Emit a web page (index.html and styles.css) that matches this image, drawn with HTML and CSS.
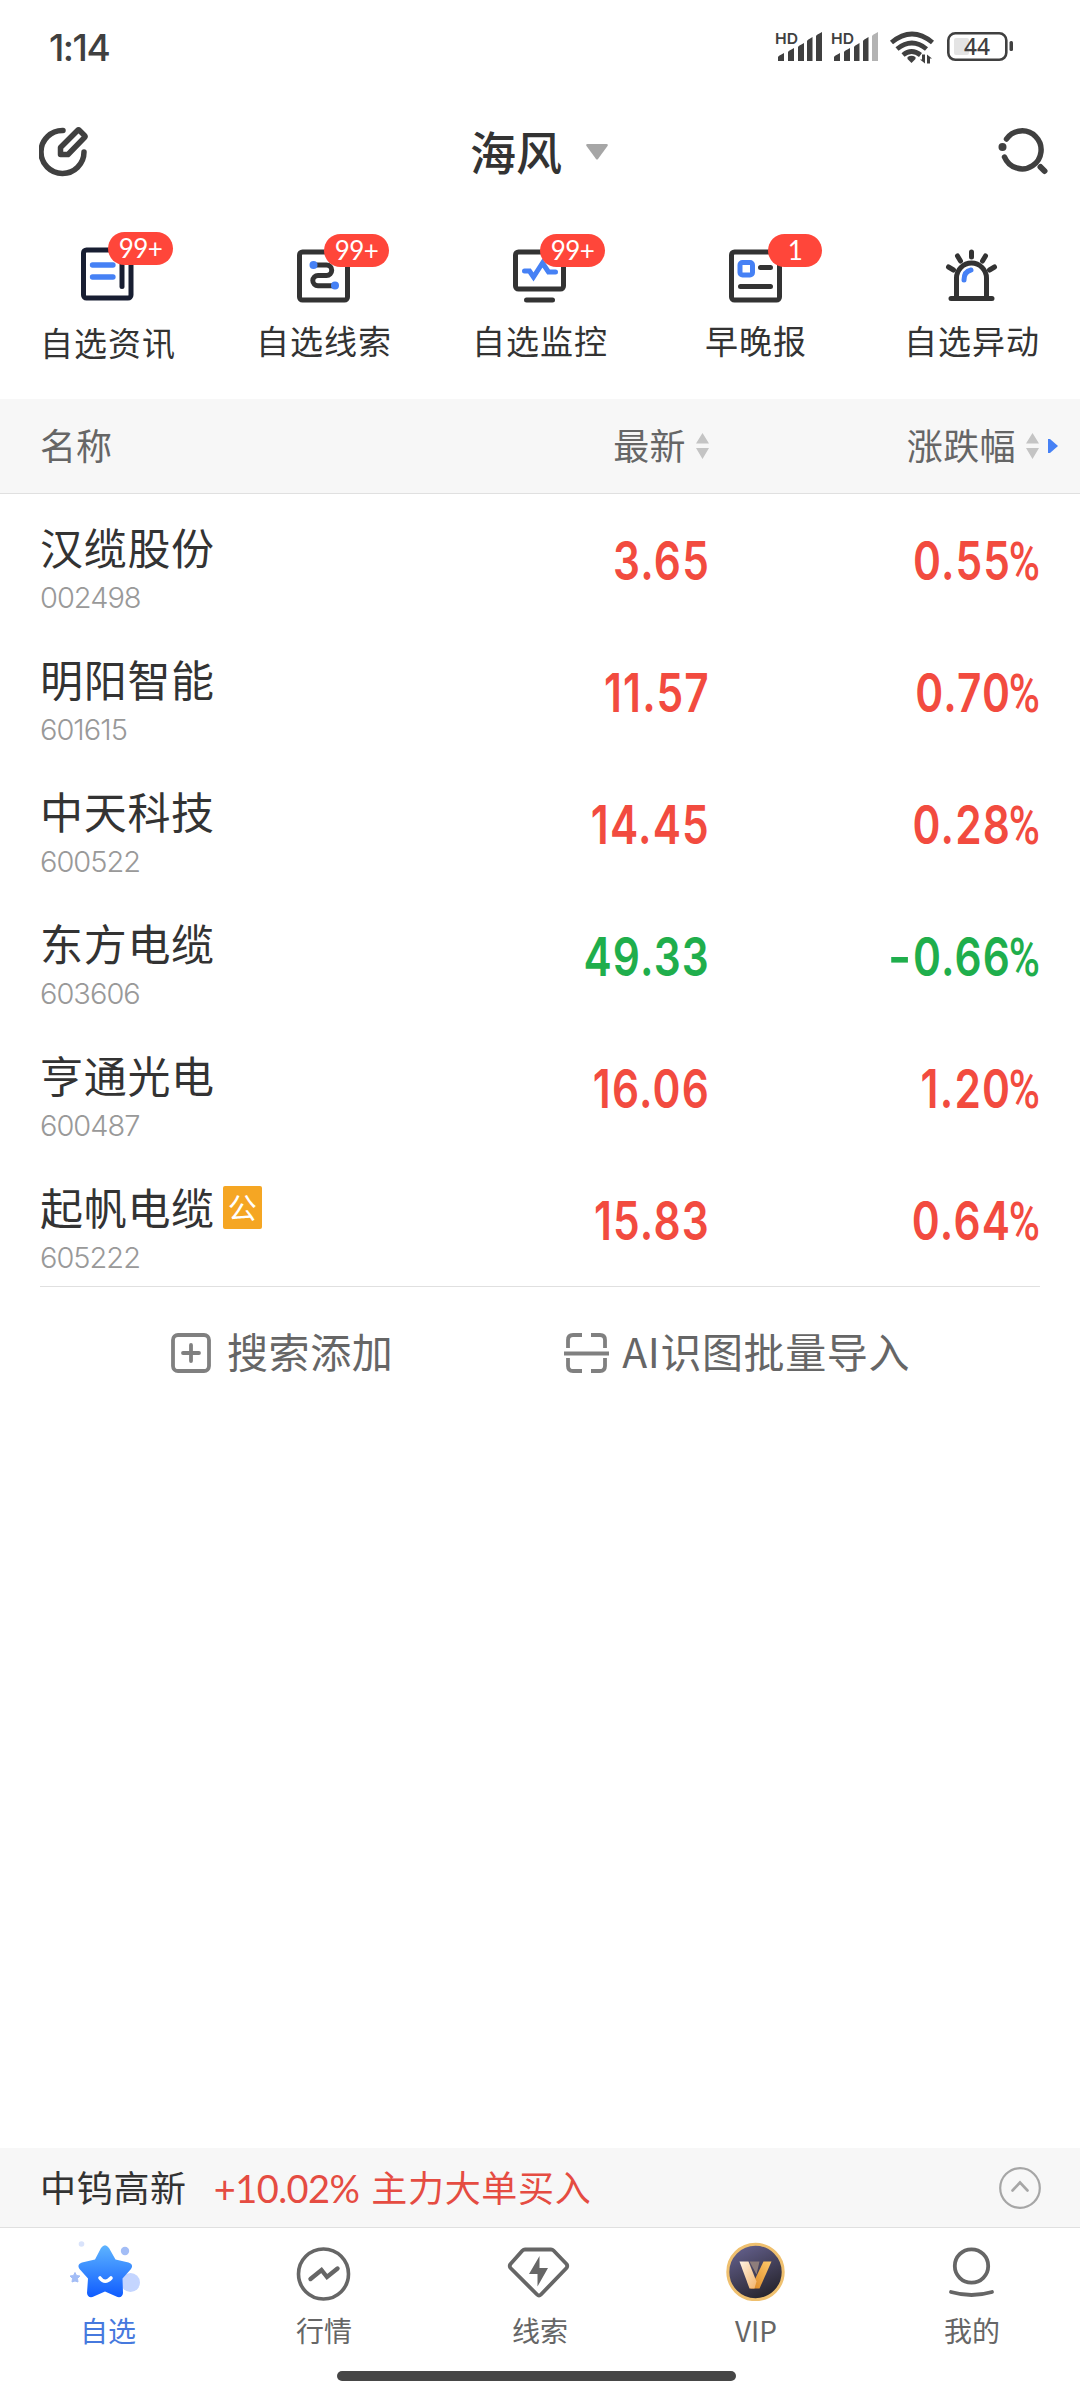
FILE: index.html
```html
<!DOCTYPE html>
<html lang="zh-CN">

<head>
    <meta charset="UTF-8">
    <meta name="viewport" content="width=device-width, initial-scale=1.0">
    <title>海风</title>
    <link rel="stylesheet" href="styles.css">
</head>

<body>
    <div class="status">
        <span class="clock">1:14</span>
        <svg class="status_icons" width="244" height="44" viewBox="772 25 244 44">
            <g fill="#404040">
                <text class="hd" x="775" y="43.500" textLength="23" lengthAdjust="spacingAndGlyphs">HD</text>
                <path d="M778 61v-4q0-1 6-4v8zM788 61v-9q0-1 6-4v13zM798 61v-14q0-1 6-4v18zM807 61v-20q0-1 5.500-4v24zM816 61v-25q0-1 6-4v29z" />
                <text class="hd" x="831" y="43.500" textLength="23" lengthAdjust="spacingAndGlyphs">HD</text>
                <path d="M834 61v-4q0-1 6-4v8zM844 61v-9q0-1 6-4v13zM854 61v-14q0-1 5.500-4v18zM863 61v-20q0-1 5.500-4v24z" />
                <path fill="#b3b3b3" d="M872 61v-25q0-1 6-4v29z" />
                <path d="M907.500 57q4-2.500 8 0v2l-4 4-4-4z" />
                <path d="M922 54.500h3v9l-5-4h2zM927 63.500v-9l5 4h-2v5z" />
                <rect x="1009.500" y="41" width="3.500" height="10" rx="1.500" />
                <rect x="954" y="38" width="15" height="17" rx="2" fill="#e4e4e4" />
                <text class="battery_num" x="964" y="55" textLength="26" lengthAdjust="spacingAndGlyphs">44</text>
            </g>
            <g fill="none" stroke="#404040">
                <path stroke-width="4.800" d="M891.500 42.500q20.500-17 41 0M897 49q15-12 29.500 0M903 55q8.500-7 17.500 0" />
                <rect x="948.300" y="33.300" width="58" height="26.500" rx="7" stroke-width="2.600" />
            </g>
        </svg>
    </div>

    <div class="top_bar">
        <svg width="50" height="50" viewBox="0 0 50 50" fill="none" stroke="#404040" stroke-width="5.500" stroke-linecap="round" stroke-linejoin="round">
            <path d="M24 3.500A21.500 21.500 0 1 0 45 25" />
            <path d="M21.500 20.500L38.500 3.500q1-1 2 0l5 5q1 1 0 2L29 27.500h-7.500z" />
        </svg>
        <div class="title"><span>海风</span>
            <svg width="22" height="16" viewBox="0 0 22 16">
                <path fill="#a6a6a6" d="M1.500 0h19q2 0 1 2L12 15q-1 1-2 0L.5 2q-1-2 1-2z" />
            </svg>
        </div>
        <svg width="50" height="50" viewBox="0 0 50 50" fill="none" stroke="#404040" stroke-width="5.500" stroke-linecap="round">
            <path d="M8.500 12A19 19 0 1 1 6.500 30" />
            <circle cx="4.500" cy="20" r="4" fill="#404040" stroke="none" />
            <path d="M42.500 40l4 4" stroke-width="6" />
        </svg>
    </div>

    <div class="menu">
        <div class="menu_item first">
            <svg width="54" height="54" viewBox="0.500 0 54 54" fill="none" stroke="#181e32" stroke-width="5" stroke-linecap="round">
                <rect x="3" y="3" width="47.500" height="48" rx="3" />
                <path d="M41.500 15v24.500" />
                <path d="M12 18h20.500M12 30h20.500" stroke="#4681f5" stroke-width="5.300" />
            </svg>
            <span class="badge">99+</span>
            <span>自选资讯</span>
        </div>
        <div class="menu_item">
            <svg width="54" height="54" viewBox="0.500 0 54 54" fill="none" stroke="#333" stroke-width="5">
                <rect x="3" y="3" width="48" height="48" rx="3" />
                <path d="M17 16h13a5.200 5.200 0 0 1 0 10.400H21.500a5.200 5.200 0 0 0 0 10.400H37" />
                <circle cx="17" cy="16" r="4" fill="#4681f5" stroke="none" />
                <circle cx="38.500" cy="36.500" r="4" fill="#4681f5" stroke="none" />
            </svg>
            <span class="badge">99+</span>
            <span>自选线索</span>
        </div>
        <div class="menu_item">
            <svg width="54" height="54" viewBox="0.500 0 54 54" fill="none" stroke="#333" stroke-width="5" stroke-linecap="round">
                <rect x="3" y="3" width="48" height="37" rx="3" />
                <path d="M14 51h26" />
                <path d="M12 22h5l4 6 9-14 6 9h7" stroke="#4681f5" />
            </svg>
            <span class="badge">99+</span>
            <span>自选监控</span>
        </div>
        <div class="menu_item">
            <svg width="54" height="54" viewBox="0.500 0 54 54" fill="none" stroke="#333" stroke-width="5" stroke-linecap="round">
                <rect x="3" y="3" width="48" height="48" rx="3" />
                <rect x="11.500" y="13.500" width="12.500" height="12.500" rx="2.500" stroke="#4681f5" />
                <path d="M32 18.500h10M12 37.500h30" />
            </svg>
            <span class="badge one">1</span>
            <span>早晚报</span>
        </div>
        <div class="menu_item">
            <svg width="54" height="54" viewBox="0.500 0 54 54" fill="none" stroke="#333" stroke-width="5" stroke-linecap="round">
                <path d="M6.500 49.500h41M12 49V29a15 15 0 0 1 30 0v20" />
                <path d="M27 3v5M13 7l3 5M41 7l-3 5M4 18l5 3M50 18l-5 3" />
                <path d="M19.500 31q0-8.500 7-10" stroke="#4681f5" />
            </svg>
            <span>自选异动</span>
        </div>
    </div>

    <div class="grid_row head">
        <div><span>名称</span></div>
        <div class="right"><span>最新</span>
            <svg width="13" height="26" viewBox="0 0 13 26" fill="#c4c4c4"><path d="M6.500 0L13 10.500H0zM0 15h13L6.500 26z" /></svg>
        </div>
        <div class="right"><span>涨跌幅</span>
            <svg width="13" height="26" viewBox="0 0 13 26" fill="#c4c4c4"><path d="M6.500 0L13 10.500H0zM0 15h13L6.500 26z" /></svg>
            <svg class="more" width="10" height="14" viewBox="0 0 10 14"><path fill="#4681f5" d="M0 0h2l8 7-8 7H0z" /></svg>
        </div>
    </div>

    <div class="list">
        <div class="grid_row">
            <div><div class="name">汉缆股份</div><div class="code">002498</div></div>
            <div class="num">3.65</div>
            <div class="num">0.55<span class="unit">%</span></div>
        </div>
        <div class="grid_row">
            <div><div class="name">明阳智能</div><div class="code">601615</div></div>
            <div class="num">11.57</div>
            <div class="num">0.70<span class="unit">%</span></div>
        </div>
        <div class="grid_row">
            <div><div class="name">中天科技</div><div class="code">600522</div></div>
            <div class="num">14.45</div>
            <div class="num">0.28<span class="unit">%</span></div>
        </div>
        <div class="grid_row">
            <div><div class="name">东方电缆</div><div class="code">603606</div></div>
            <div class="num down">49.33</div>
            <div class="num down"><span class="minus">-</span>0.66<span class="unit">%</span></div>
        </div>
        <div class="grid_row">
            <div><div class="name">亨通光电</div><div class="code">600487</div></div>
            <div class="num">16.06</div>
            <div class="num">1.20<span class="unit">%</span></div>
        </div>
        <div class="grid_row">
            <div><div class="name">起帆电缆<span class="tag">公</span></div><div class="code">605222</div></div>
            <div class="num">15.83</div>
            <div class="num">0.64<span class="unit">%</span></div>
        </div>
    </div>

    <div class="add">
        <div class="add_item">
            <svg width="40" height="40" viewBox="0 0 40 40" fill="none" stroke="#808080" stroke-width="3.800" stroke-linecap="round">
                <rect x="2" y="2" width="36" height="36" rx="5" />
                <path d="M20 12v16M12 20h16" />
            </svg>
            <span>搜索添加</span>
        </div>
        <div class="add_item">
            <svg width="45" height="40" viewBox="0 0 45 40" fill="none" stroke="#808080" stroke-width="3.800">
                <path d="M18 2H9q-5 0-5 5v8M27 2h9q5 0 5 5v8M18 38H9q-5 0-5-5v-8M27 38h9q5 0 5-5v-8M0 20.500h45" />
            </svg>
            <span>AI识图批量导入</span>
        </div>
    </div>

    <div class="ticker">
        <span>中钨高新</span>
        <span class="ticker_red"><span class="pct">+10.02%</span>主力大单买入</span>
        <svg width="42" height="42" viewBox="0 0 42 42" fill="none" stroke="#a6a6a6" stroke-width="2.200" stroke-linecap="round">
            <circle cx="21" cy="21" r="19.800" />
            <path d="M13.500 23.500l7.500-8 7.500 8" stroke-width="2.600" />
        </svg>
    </div>

    <div class="tabs">
        <div class="tab active">
            <svg width="76" height="62" viewBox="3 0 76 62">
                <defs>
                    <linearGradient id="star" x1="0" y1="0" x2="0" y2="1">
                        <stop offset="0" stop-color="#5eb4ff" />
                        <stop offset="1" stop-color="#0f5cff" />
                    </linearGradient>
                </defs>
                <circle cx="14.500" cy="5" r="2.800" fill="#d9e3fb" />
                <circle cx="58" cy="12" r="4.200" fill="#a3bdf6" />
                <circle cx="63.500" cy="43.500" r="9.500" fill="#c4d5ff" />
                <path fill="#a3bdf6" stroke="#a3bdf6" stroke-linejoin="round" d="M8 33.500l1.500 3 3.500.5-2.500 2.500.5 3.500-3-1-3 1 .5-3.500L3 37l3.500-.5z" />
                <path fill="url(#star)" d="M34 9q4-5.500 8 0l6.500 11.500 13 3q5.500 2 2.500 6.500L55.500 39.500 56 54q-.5 5-5.500 4L38 52.500 25.500 58q-5 1-5.500-4l1-14.500-8.500-9.500Q9.500 25.500 15 23.500l13-3z" />
                <path d="M33 39q5 6.500 11 0" fill="none" stroke="#fff" stroke-width="3.600" stroke-linecap="round" />
            </svg>
            <span>自选</span>
        </div>
        <div class="tab">
            <svg width="76" height="62" viewBox="0.500 0 76 62" fill="none" stroke="#666" stroke-width="3.600">
                <circle cx="38" cy="35" r="25" />
                <path d="M25 40l11-9 5.500 7L52 29.500" stroke-width="4.400" stroke-linecap="round" />
            </svg>
            <span>行情</span>
        </div>
        <div class="tab">
            <svg width="76" height="62" viewBox="2 -1 76 62">
                <path fill="none" stroke="#666" stroke-width="3.800" stroke-linejoin="round" d="M25 9.500h26q1.500 0 2.500 1L66.500 24q1.500 2 0 4L41 54.500q-2 2-4 0L10.500 28q-1.500-2 0-4L22.500 10.500q1-1 2.500-1z" />
                <path fill="#666" d="M39.500 16L29 34h8.500v12.500L48 28h-8.500z" />
            </svg>
            <span>线索</span>
        </div>
        <div class="tab">
            <svg width="76" height="62" viewBox="0.500 -1.500 76 62">
                <defs>
                    <linearGradient id="vip_bg" x1="0.200" y1="0" x2="0.700" y2="1">
                        <stop offset="0" stop-color="#65618f" />
                        <stop offset="1" stop-color="#242229" />
                    </linearGradient>
                    <linearGradient id="vip_l" x1="0" y1="0" x2="1" y2="1">
                        <stop offset="0" stop-color="#fff3e4" />
                        <stop offset="1" stop-color="#f3b56d" />
                    </linearGradient>
                    <linearGradient id="vip_r" x1="1" y1="0" x2="0" y2="1">
                        <stop offset="0" stop-color="#ffc96b" />
                        <stop offset="1" stop-color="#dc8724" />
                    </linearGradient>
                </defs>
                <circle cx="38" cy="31.500" r="27.700" fill="url(#vip_bg)" stroke="#efc06f" stroke-width="3" />
                <path fill="#8e7d7b" d="M32 21h10l-3 13z" />
                <path fill="url(#vip_r)" d="M46 21h8L42 48h-9z" />
                <path fill="url(#vip_l)" d="M22 21h9l8 20-2 7h-5z" />
            </svg>
            <span>VIP</span>
        </div>
        <div class="tab">
            <svg width="76" height="62" viewBox="0.500 -0.500 76 62" fill="none" stroke="#666" stroke-width="3.800" stroke-linecap="round">
                <circle cx="38" cy="26.500" r="16.700" />
                <path d="M17.500 52.500q20.500 6 41 0" />
            </svg>
            <span>我的</span>
        </div>
    </div>
    <div class="home_bar"></div>
</body>

</html>
```
FILE: styles.css
```css
body {
    font-family: "Noto Sans CJK SC", sans-serif;
    margin: 0;
    width: 1080px;
    height: 2400px;
    display: flex;
    flex-direction: column;
    background-color: #fff;
    color: #333;
    overflow: hidden;
}

svg {
    display: block;
    flex: none;
}

/* Status bar */

.status {
    height: 94px;
    padding: 0 64px 0 49px;
    display: flex;
    align-items: center;
    justify-content: space-between;
    color: #404040;
}

.clock {
    font-family: Inter, sans-serif;
    font-size: 37px;
    font-weight: 500;
    letter-spacing: -1.5px;
}

.hd {
    font: 600 15px "Inter", sans-serif;
}

.battery_num {
    font: 500 23px "Noto Sans", sans-serif;
}

.top_bar {
    height: 116px;
    padding: 0 32px 0 39px;
    display: flex;
    align-items: center;
    justify-content: space-between;
}

.title {
    display: flex;
    align-items: center;
    gap: 24px;
    margin-right: 9px;
    font-size: 46px;
    font-weight: 500;
}

.title span {
    margin-top: -4px;
}

/* Shortcuts */

.menu {
    height: 189px;
    display: grid;
    grid-template-columns: repeat(5, 216px);
}

.menu_item {
    position: relative;
    display: flex;
    flex-direction: column;
    align-items: center;
    padding-top: 39px;
    font-size: 33px;
    line-height: 40px;
    gap: 17px;
    letter-spacing: 1px;
}

.menu_item.first {
    padding-top: 37px;
    gap: 21px;
}

.badge {
    position: absolute;
    left: 108px;
    top: 24px;
    width: 65px;
    height: 33px;
    line-height: 32px;
    border-radius: 17px;
    background-color: #ff463a;
    color: #fff;
    font-family: Lato, sans-serif;
    font-size: 26px;
    letter-spacing: -0.5px;
    text-align: center;
}

.first .badge {
    top: 22px;
}

.badge.one {
    left: 120px;
    width: 54px;
}

/* Table */

.grid_row {
    display: grid;
    grid-template-columns: 340px 329px 330px;
    padding: 0 41px 0 40px;
    height: 132px;
}

.head {
    height: 94px;
    align-items: center;
    background-color: #f7f7f7;
    border-bottom: 1px solid #e0e0e0;
    color: #666;
    font-size: 36px;
}

.head span {
    display: block;
    margin-top: -5px;
}

.right {
    position: relative;
    display: flex;
    align-items: center;
    justify-content: flex-end;
    gap: 10px;
    letter-spacing: 0.4px;
}

.more {
    position: absolute;
    right: -19px;
}

.list {
    margin: 0 0 43px;
}

.name {
    display: flex;
    align-items: center;
    gap: 8px;
    margin-top: 22px;
    height: 60px;
    font-size: 43px;
    letter-spacing: 0.7px;
}

.tag {
    width: 39px;
    height: 43px;
    margin-top: 3px;
    line-height: 41px;
    background-color: #f5a623;
    border-radius: 2px;
    color: #fff;
    font-size: 29px;
    letter-spacing: 0;
    text-align: center;
}

.code {
    font-family: Inter, sans-serif;
    font-size: 29px;
    font-weight: 300;
    letter-spacing: -1px;
    line-height: 36px;
    margin-top: 4px;
    color: #999;
}

.num {
    font-family: Inter, sans-serif;
    font-size: 53px;
    font-weight: 600;
    line-height: 62px;
    padding-top: 36px;
    margin-right: -1px;
    text-align: right;
    color: #f24b3f;
    letter-spacing: 1.5px;
    transform: scaleX(0.8);
    transform-origin: right;
}

.unit {
    font-family: Roboto, sans-serif;
    font-weight: 500;
    letter-spacing: 0;
    margin-left: -3px;
}

.minus {
    display: inline-block;
    transform: scaleX(1.2);
    transform-origin: right;
}

.num.down {
    color: #1fae4c;
}

.add {
    border-top: 1px solid #e0e0e0;
    margin: -43px 40px 0;
    padding: 0 130px 0 131px;
    height: 131px;
    display: flex;
    align-items: center;
    justify-content: space-between;
    font-size: 41px;
    color: #666;
}

.add_item {
    display: flex;
    align-items: center;
    gap: 16px;
    letter-spacing: 0.6px;
}

.add_item + .add_item {
    gap: 13px;
}

.add_item span {
    margin-top: -5px;
}

/* Bottom */

.ticker {
    margin-top: auto;
    height: 79px;
    padding: 0 39px 0 40px;
    display: flex;
    align-items: center;
    background-color: #f7f7f7;
    border-bottom: 1px solid #e0e0e0;
    font-size: 36px;
    letter-spacing: 0.7px;
}

.ticker > span {
    margin-top: -4px;
}

.ticker_red {
    display: flex;
    align-items: center;
    gap: 12px;
    margin-left: 27px;
    margin-right: auto;
    color: #e54c42;
}

.pct {
    font-family: Lato, sans-serif;
    font-size: 38px;
    letter-spacing: -0.6px;
    margin-top: 4px;
}

.tabs {
    height: 143px;
    display: grid;
    grid-template-columns: repeat(5, 216px);
}

.tab {
    padding-top: 11px;
    display: flex;
    flex-direction: column;
    align-items: center;
    gap: 9px;
    font-size: 28px;
    line-height: 40px;
    color: #666;
}

.tab.active {
    color: #4679de;
}

.home_bar {
    width: 399px;
    height: 10px;
    margin: 0 0 19px 337px;
    border-radius: 5px;
    background-color: #464646;
}
```
